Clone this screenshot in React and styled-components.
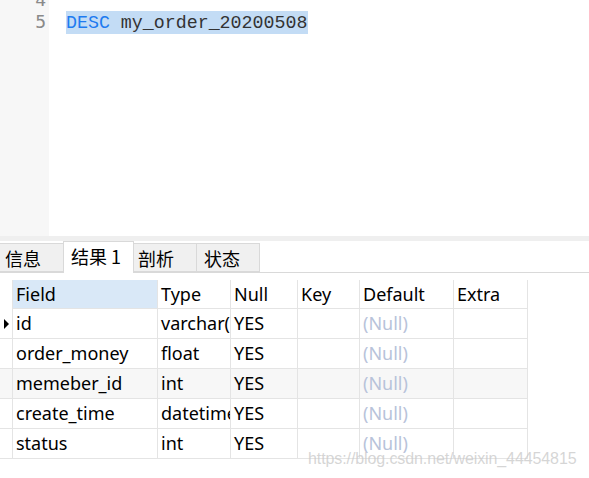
import React from "react";
import styled, { createGlobalStyle } from "styled-components";

const Global = createGlobalStyle`
  html, body { margin: 0; padding: 0; background: #fff; }
  body { width: 589px; height: 478px; overflow: hidden; font-family: "Noto Sans", "Noto Sans CJK SC", sans-serif; }
`;

const Page = styled.div`
  position: relative;
  width: 589px;
  height: 478px;
  display: flex;
  flex-direction: column;
  background: #fff;
`;

const Editor = styled.div`
  height: 236px;
  display: flex;
  overflow: hidden;
`;

const Gutter = styled.div`
  width: 49px;
  background: #f7f7f7;
  display: flex;
  flex-direction: column;
  align-items: flex-end;
  padding-right: 3px;
  box-sizing: border-box;
`;

const LineNo = styled.div`
  height: 22px;
  line-height: 22px;
  font-family: "DejaVu Sans Mono", monospace;
  font-size: 18px;
  color: #8a8a8a;
  &:first-child { margin-top: -11px; }
`;

const Code = styled.div`
  flex: 1;
  padding-left: 17px;
  display: flex;
  flex-direction: column;
`;

const CodeLine = styled.div`
  height: 22px;
  line-height: 22px;
  font-family: "Liberation Mono", "DejaVu Sans Mono", monospace;
  font-size: 18.3px;
  color: #333;
  white-space: pre;
  &:first-child { margin-top: -11px; }
`;

const Selected = styled.span`
  background: #c3dcf5;
  display: inline-block;
  height: 22px;
  padding-top: 1px;
  padding-right: 1px;
`;

const Kw = styled.span`
  color: #1e7bf0;
`;

const Band = styled.div`
  height: 5px;
  background: #efefef;
`;

const TabBar = styled.div`
  height: 31px;
  display: flex;
  align-items: flex-end;
  border-bottom: 1px solid #d9d9d9;
`;

const Tab = styled.div`
  box-sizing: border-box;
  width: ${(p) => p.$w}px;
  height: ${(p) => (p.$active ? 32 : 29)}px;
  margin-bottom: ${(p) => (p.$active ? -1 : 0)}px;
  background: ${(p) => (p.$active ? "#fff" : "#f0f0f0")};
  border: 1px solid #d9d9d9;
  border-bottom: ${(p) => (p.$active ? "none" : "1px solid #d9d9d9")};
  border-left: ${(p) => (p.$first ? "none" : "1px solid #d9d9d9")};
  margin-left: ${(p) => (p.$overlap ? -1 : 0)}px;
  font-family: "Noto Sans CJK SC", sans-serif;
  font-size: 18px;
  color: #000;
  display: flex;
  align-items: center;
  padding-left: ${(p) => p.$pl}px;
  padding-bottom: ${(p) => (p.$active ? 3 : 0)}px;
`;

const Table = styled.div`
  margin-top: 7px;
  display: grid;
  grid-template-columns: 13px 145px 73px 67px 62px 94px 74px;
  width: 528px;
  font-family: "Noto Sans", "Noto Sans CJK SC", sans-serif;
  font-size: 18px;
  color: #000;
`;

const HeadCell = styled.div`
  box-sizing: border-box;
  height: 29px;
  line-height: 28px;
  padding-left: 3px;
  border-right: 1px solid #e4e4e4;
  border-bottom: 1px solid #e4e4e4;
  background: ${(p) => (p.$sel ? "#d9e8f7" : "#fff")};
  white-space: nowrap;
  overflow: hidden;
`;

const Corner = styled.div`
  height: 29px;
  border-right: 1px solid #e4e4e4;
  box-sizing: border-box;
`;

const Indicator = styled.div`
  box-sizing: border-box;
  height: 30px;
  border-right: 1px solid #e4e4e4;
  border-bottom: 1px solid #e4e4e4;
  background: ${(p) => (p.$alt ? "#f7f7f7" : "#fff")};
  display: flex;
  align-items: center;
  justify-content: center;
`;

const Cell = styled.div`
  box-sizing: border-box;
  height: 30px;
  line-height: 29px;
  padding-left: 3px;
  border-right: 1px solid #e4e4e4;
  border-bottom: 1px solid #e4e4e4;
  background: ${(p) => (p.$alt ? "#f7f7f7" : "#fff")};
  color: ${(p) => (p.$null ? "#b8c3da" : "#000")};
  white-space: nowrap;
  overflow: hidden;
`;

const Watermark = styled.div`
  position: absolute;
  left: 308px;
  top: 450px;
  font-family: "Liberation Sans", sans-serif;
  font-size: 16px;
  letter-spacing: -0.1px;
  color: rgba(200, 200, 200, 0.75);
  white-space: nowrap;
`;

const Arrow = () => (
  <svg width="7" height="10" viewBox="0 0 7 10">
    <path d="M1 0 L6 5 L1 10 Z" fill="#000" />
  </svg>
);

const cols = ["Field", "Type", "Null", "Key", "Default", "Extra"];
const rows = [
  ["id", "varchar(", "YES", "", null, ""],
  ["order_money", "float", "YES", "", null, ""],
  ["memeber_id", "int", "YES", "", null, ""],
  ["create_time", "datetime", "YES", "", null, ""],
  ["status", "int", "YES", "", null, ""],
];

export default function App() {
  return (
    <Page>
      <Global />
      <Editor>
        <Gutter>
          <LineNo>4</LineNo>
          <LineNo>5</LineNo>
        </Gutter>
        <Code>
          <CodeLine> </CodeLine>
          <CodeLine>
            <Selected>
              <Kw>DESC</Kw> my_order_20200508
            </Selected>
          </CodeLine>
        </Code>
      </Editor>
      <Band />
      <TabBar>
        <Tab $w={64} $pl={5} $first>信息</Tab>
        <Tab $w={71} $pl={7} $active $overlap>结果 1</Tab>
        <Tab $w={64} $pl={4} $overlap>剖析</Tab>
        <Tab $w={64} $pl={7} $overlap>状态</Tab>
      </TabBar>
      <Table>
        <Corner />
        {cols.map((c, i) => (
          <HeadCell key={c} $sel={i === 0}>{c}</HeadCell>
        ))}
        {rows.map((r, ri) => (
          <React.Fragment key={ri}>
            <Indicator $alt={ri === 2}>{ri === 0 && <Arrow />}</Indicator>
            {r.map((v, ci) => (
              <Cell key={ci} $alt={ri === 2} $null={v === null}>
                {v === null ? "(Null)" : v}
              </Cell>
            ))}
          </React.Fragment>
        ))}
      </Table>
      <Watermark>https://blog.csdn.net/weixin_44454815</Watermark>
    </Page>
  );
}
